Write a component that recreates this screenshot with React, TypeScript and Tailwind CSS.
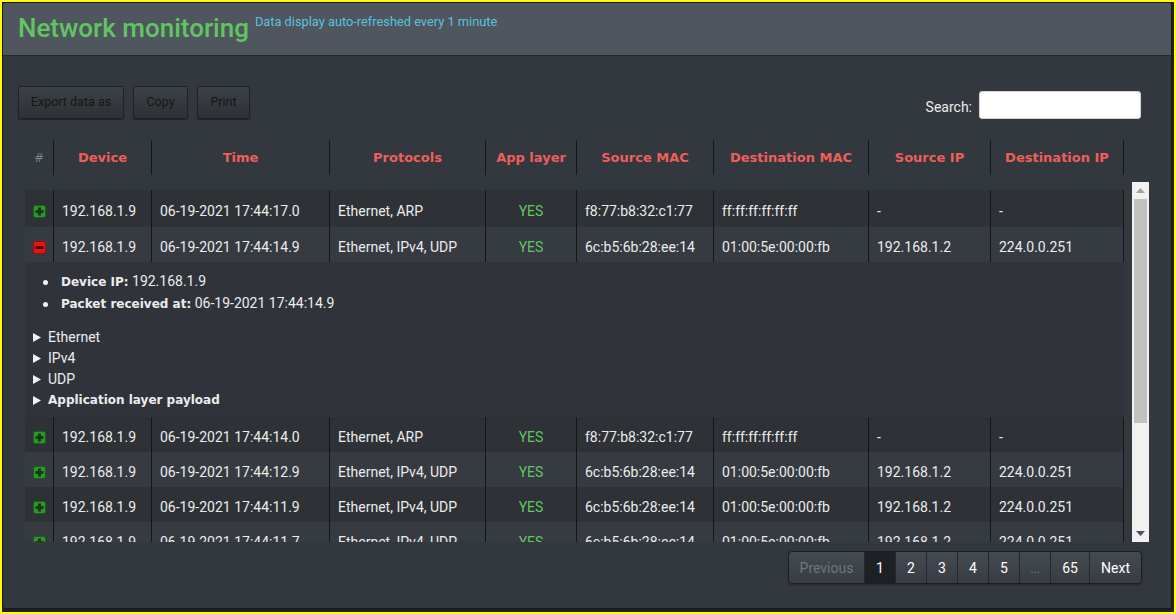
import React from 'react';

type Row = {
  time: string;
  proto: string;
  src: string;
  dst: string;
  sip: string;
  dip: string;
  open?: boolean;
};

const rows: Row[] = [
  { time: '06-19-2021 17:44:17.0', proto: 'Ethernet, ARP', src: 'f8:77:b8:32:c1:77', dst: 'ff:ff:ff:ff:ff:ff', sip: '-', dip: '-' },
  { time: '06-19-2021 17:44:14.9', proto: 'Ethernet, IPv4, UDP', src: '6c:b5:6b:28:ee:14', dst: '01:00:5e:00:00:fb', sip: '192.168.1.2', dip: '224.0.0.251', open: true },
  { time: '06-19-2021 17:44:14.0', proto: 'Ethernet, ARP', src: 'f8:77:b8:32:c1:77', dst: 'ff:ff:ff:ff:ff:ff', sip: '-', dip: '-' },
  { time: '06-19-2021 17:44:12.9', proto: 'Ethernet, IPv4, UDP', src: '6c:b5:6b:28:ee:14', dst: '01:00:5e:00:00:fb', sip: '192.168.1.2', dip: '224.0.0.251' },
  { time: '06-19-2021 17:44:11.9', proto: 'Ethernet, IPv4, UDP', src: '6c:b5:6b:28:ee:14', dst: '01:00:5e:00:00:fb', sip: '192.168.1.2', dip: '224.0.0.251' },
  { time: '06-19-2021 17:44:11.7', proto: 'Ethernet, IPv4, UDP', src: '6c:b5:6b:28:ee:14', dst: '01:00:5e:00:00:fb', sip: '192.168.1.2', dip: '224.0.0.251' },
];

const headers = ['Device', 'Time', 'Protocols', 'App layer', 'Source MAC', 'Destination MAC', 'Source IP', 'Destination IP'];

const cols = 'grid grid-cols-[28px_98px_178px_156px_91px_137px_155px_122px_134px]';

const Toggle = ({ open }: { open?: boolean }) =>
  open ? (
    <svg width="13" height="13" viewBox="0 0 13 13">
      <rect x="0.5" y="0.5" width="12" height="12" rx="2" fill="#e41515" stroke="#9a0c0c" />
      <rect x="2.5" y="5" width="8" height="3" fill="#4a0505" />
    </svg>
  ) : (
    <svg width="13" height="13" viewBox="0 0 13 13">
      <rect x="0.5" y="0.5" width="12" height="12" rx="2" fill="#2e952e" stroke="#1c5c1c" />
      <rect x="2.5" y="5" width="8" height="3" fill="#133a13" />
      <rect x="5" y="2.5" width="3" height="8" fill="#133a13" />
    </svg>
  );

const Arrow = () => (
  <svg width="8" height="9" viewBox="0 0 8 9" className="shrink-0">
    <path d="M0 0 L8 4.5 L0 9 Z" fill="#f2f2f2" />
  </svg>
);

const DataRow = ({ row, even, first }: { row: Row; even: boolean; first?: boolean }) => (
  <div
    className={`${cols} ${first ? 'h-[37px]' : 'h-[35px]'} ${even ? 'bg-[#363a41]' : 'bg-[#2e3237]'} text-[14px] text-[#ececec] [&>div]:pt-[5px]`}
  >
    <div className="flex items-center justify-center">
      <Toggle open={row.open} />
    </div>
    <div className="flex items-center border-l border-[#141619] px-2">192.168.1.9</div>
    <div className="flex items-center border-l border-[#141619] px-2">{row.time}</div>
    <div className="flex items-center border-l border-[#141619] px-2">{row.proto}</div>
    <div className="flex items-center justify-center border-l border-[#141619] px-2 text-[#62c462]">YES</div>
    <div className="flex items-center border-l border-[#141619] px-2">{row.src}</div>
    <div className="flex items-center border-l border-[#141619] px-2">{row.dst}</div>
    <div className="flex items-center border-l border-[#141619] px-2">{row.sip}</div>
    <div className="flex items-center border-x border-[#141619] px-2">{row.dip}</div>
  </div>
);

const Bullet = ({ label, value }: { label: string; value: string }) => (
  <div className="flex items-center">
    <span className="ml-[18px] w-[5px] h-[5px] rounded-full bg-[#f2f2f2] shrink-0" />
    <span className="ml-[13px]">
      <span className="font-['DejaVu_Sans',sans-serif] font-bold text-[12px]">{label}</span> {value}
    </span>
  </div>
);

const Detail = () => (
  <div className="w-[1099px] h-[155px] bg-[#30343a] text-[14px] text-[#ececec] pt-[9px]">
    <div className="flex flex-col leading-[21px]">
      <Bullet label="Device IP:" value="192.168.1.9" />
      <Bullet label="Packet received at:" value="06-19-2021 17:44:14.9" />
    </div>
    <div className="mt-[12px] pl-[8px] flex flex-col leading-[21px]">
      {['Ethernet', 'IPv4', 'UDP'].map((p) => (
        <div key={p} className="flex items-center gap-[7px]">
          <Arrow />
          <span>{p}</span>
        </div>
      ))}
      <div className="flex items-center gap-[7px]">
        <Arrow />
        <span className="font-['DejaVu_Sans',sans-serif] font-bold text-[12px]">Application layer payload</span>
      </div>
    </div>
  </div>
);

const Pager = () => {
  const items = [
    { t: 'Previous', w: 'w-[75px]', c: 'text-[#6f767c]' },
    { t: '1', w: 'w-[31px]', c: 'text-white bg-[#1e2124]' },
    { t: '2', w: 'w-[31px]', c: 'text-white' },
    { t: '3', w: 'w-[31px]', c: 'text-white' },
    { t: '4', w: 'w-[31px]', c: 'text-white' },
    { t: '5', w: 'w-[31px]', c: 'text-white' },
    { t: '…', w: 'w-[31px]', c: 'text-[#6f767c]' },
    { t: '65', w: 'w-[39px]', c: 'text-white' },
    { t: 'Next', w: 'w-[52px]', c: 'text-white' },
  ];
  return (
    <div className="flex h-[33px] rounded-[4px] border border-[#1c1e21] overflow-hidden bg-linear-to-b from-[#444a51] to-[#383d43] shadow-[0_1px_2px_rgba(0,0,0,0.3)]">
      {items.map((it, i) => (
        <div
          key={i}
          className={`${it.w} ${it.c} flex items-center justify-center pt-[2px] text-[14px] ${i > 0 ? 'border-l border-[#25282c]' : ''}`}
        >
          {it.t}
        </div>
      ))}
    </div>
  );
};

const ToolButton = ({ label, w }: { label: string; w: string }) => (
  <div
    className={`${w} h-[33px] flex items-center justify-center rounded-[2px] border border-[#1f2226] bg-linear-to-b from-[#3d4247] to-[#2d3135] text-[12.5px] text-[#161616] shadow-[0_1px_1px_rgba(0,0,0,0.35)]`}
  >
    {label}
  </div>
);

export default function App() {
  return (
    <div className="w-[1176px] h-[614px] border-2 border-[#ffff00] bg-[#1c1e22] font-['Roboto',sans-serif] overflow-hidden">
      <div className="w-[1170px] h-[607px] border border-[#16181b] rounded-[3px] bg-[#33373e] overflow-hidden">
        <div className="h-[53px] bg-[#4f565e] border-b border-[#25282c] flex items-start pl-[15px] pt-[12px]">
          <h1 className="text-[26px] leading-none font-medium text-[#62c462]">Network monitoring</h1>
          <span className="ml-[6px] mt-[1px] text-[12.8px] leading-none text-[#5bc0de]">Data display auto-refreshed every 1 minute</span>
        </div>

        <div className="px-[14px]">
          <div className="flex items-end justify-between pt-[30px] pr-[16px]">
            <div className="flex gap-[9px] pl-[1px]">
              <ToolButton label="Export data as" w="w-[106px]" />
              <ToolButton label="Copy" w="w-[55px]" />
              <ToolButton label="Print" w="w-[53px]" />
            </div>
            <label className="flex items-center gap-[7px] text-[14px] text-[#ececec]">
              <span className="pt-[4px]">Search:</span>
              <input className="w-[162px] h-[28px] rounded-[3px] bg-white border border-[#cfd3d6] outline-none px-2 text-[14px] text-black" />
            </label>
          </div>

          <div className="ml-[8px] mt-[21px]">
            <div className={`${cols} h-[35px] font-['DejaVu_Sans',sans-serif] font-bold text-[13px] text-[#ee5f5b]`}>
              <div className="flex items-center justify-center text-[#7a8288] font-normal text-[12px]">#</div>
              {headers.map((h, i) => (
                <div
                  key={h}
                  className={`flex items-center justify-center pt-[1px] ${i === headers.length - 1 ? 'border-x' : 'border-l'} border-[#141619]`}
                >
                  {h}
                </div>
              ))}
            </div>

            <div className="mt-[7px] flex h-[360px]">
              <div className="w-[1099px] h-[360px] overflow-hidden pt-[8px]">
                <DataRow row={rows[0]} even={false} first />
                <DataRow row={rows[1]} even={true} />
                <Detail />
                <DataRow row={rows[2]} even={false} />
                <DataRow row={rows[3]} even={true} />
                <DataRow row={rows[4]} even={false} />
                <DataRow row={rows[5]} even={true} />
              </div>
              <div className="ml-[8px] w-[17px] h-[360px] bg-[#f1f1f1] flex flex-col items-center">
                <div className="h-[17px] flex items-center justify-center">
                  <svg width="9" height="5" viewBox="0 0 9 5">
                    <path d="M0 5 L4.5 0 L9 5 Z" fill="#a3a3a3" />
                  </svg>
                </div>
                <div className="w-[13px] h-[224px] bg-[#c1c1c1]" />
                <div className="flex-1" />
                <div className="h-[17px] flex items-center justify-center">
                  <svg width="9" height="5" viewBox="0 0 9 5">
                    <path d="M0 0 L9 0 L4.5 5 Z" fill="#505050" />
                  </svg>
                </div>
              </div>
            </div>
          </div>

          <div className="flex justify-end mt-[9px] pr-[15px]">
            <Pager />
          </div>
        </div>
      </div>
    </div>
  );
}
